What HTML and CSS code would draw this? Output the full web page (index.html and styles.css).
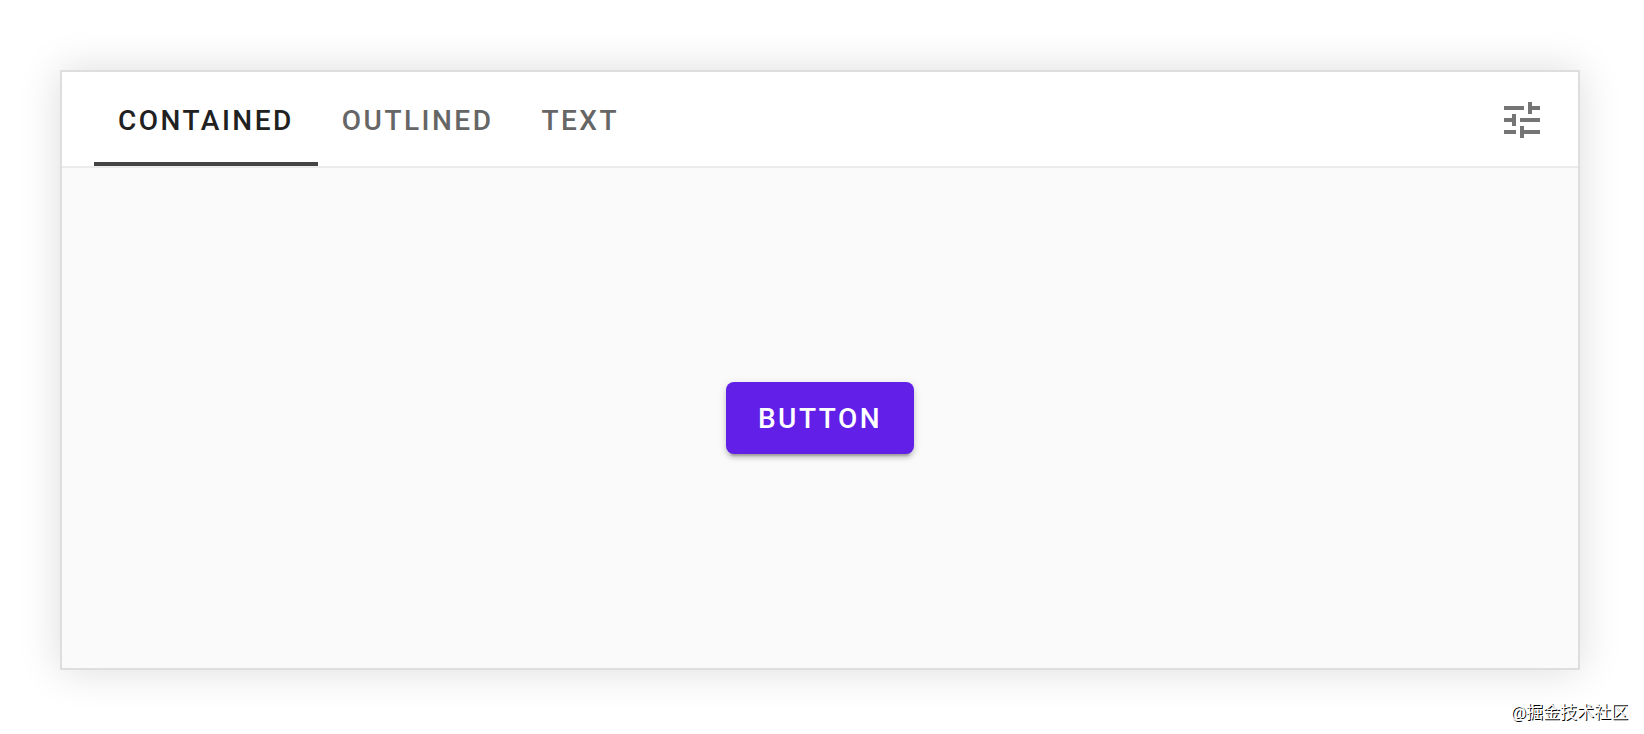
FILE: index.html
```html
<!DOCTYPE html>
<html lang="en">
<head>
<meta charset="utf-8">
<meta name="viewport" content="width=device-width, initial-scale=1">
<title>Button demo</title>
<link rel="stylesheet" href="styles.css">
</head>
<body class="page">
<main class="card">
  <header class="bar">
    <div class="tabs" role="tablist" aria-label="Button type">
      <button class="tab tab-active" type="button" role="tab" aria-selected="true">CONTAINED</button>
      <button class="tab" type="button" role="tab" aria-selected="false">OUTLINED</button>
      <button class="tab" type="button" role="tab" aria-selected="false">TEXT</button>
    </div>
    <button class="tune" type="button" aria-label="Configure">
      <svg class="tune-icon" viewBox="0 0 24 24" aria-hidden="true"><path d="M3 17v2h6v-2H3zM3 5v2h10V5H3zm10 16v-2h8v-2h-8v-2h-2v6h2zM7 9v2H3v2h4v2h2V9H7zm14 4v-2H11v2h10zm-6-4h2V7h4V5h-4V3h-2v6z"/></svg>
    </button>
  </header>
  <section class="stage">
    <button class="contained" type="button">BUTTON</button>
  </section>
</main>
<footer class="credit" lang="zh">@掘金技术社区</footer>
</body>
</html>
```
FILE: styles.css
```css
* {
  box-sizing: border-box;
}

.page {
  display: flex;
  flex-direction: column;
  min-height: 100vh;
  margin: 0;
  padding: 70px 16px 10px 60px;
  background: #fff;
  font-family: Roboto, "Noto Sans CJK SC", sans-serif;
}

.card {
  display: flex;
  flex: 1;
  flex-direction: column;
  margin-right: 48px;
  border: 2px solid #dedede;
  background: #fafafa;
  box-shadow: 0 0 40px rgba(0, 0, 0, 0.14);
}

.bar {
  display: flex;
  justify-content: space-between;
  align-items: center;
  height: 96px;
  padding: 0 32px;
  border-bottom: 2px solid #ebebeb;
  background: #fff;
}

.tabs {
  display: flex;
  align-self: stretch;
}

.tab,
.contained {
  border: 0;
  font: 500 28px/36px Roboto, sans-serif;
  letter-spacing: 2.5px;
}

.tab {
  padding: 8px 24px 0;
  border-bottom: 4px solid transparent;
  background: none;
  color: #666;
}

.tab-active {
  border-bottom-color: #444;
  color: #212121;
}

.tune {
  display: flex;
  padding: 2px 0 0;
  border: 0;
  background: none;
}

.tune-icon {
  width: 48px;
  height: 48px;
  fill: #757575;
}

.stage {
  display: flex;
  flex: 1;
  align-items: center;
  justify-content: center;
}

.contained {
  padding: 19px 32px 17px;
  border-radius: 8px;
  background: #611fe8;
  color: #fff;
  box-shadow: 0 6px 2px -4px rgba(0, 0, 0, 0.2), 0 4px 4px rgba(0, 0, 0, 0.14), 0 2px 10px rgba(0, 0, 0, 0.12);
}

.credit {
  margin-top: 30px;
  color: #fff;
  font-size: 17px;
  line-height: 24px;
  text-align: right;
  text-shadow: 1px 1px 0 #000;
}
```
